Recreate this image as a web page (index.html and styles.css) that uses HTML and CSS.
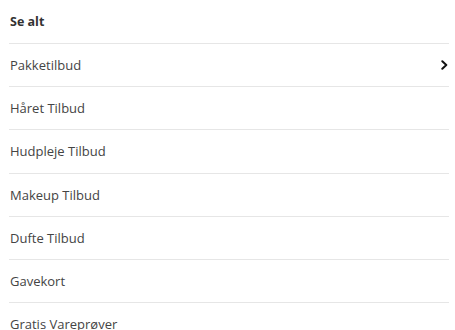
FILE: index.html
```html
<!DOCTYPE html>
<html lang="da">
<head>
<meta charset="utf-8">
<link rel="stylesheet" href="styles.css">
</head>
<body>
<nav class="menu">
  <div class="menu-head">Se alt</div>
  <ul class="menu-list">
    <li class="menu-item"><span>Pakketilbud</span>
      <svg class="chev" width="7" height="10" viewBox="0 0 7 10"><path d="M1.3 1.3 L5.3 5 L1.3 8.7" fill="none" stroke="#111" stroke-width="2" stroke-linecap="round" stroke-linejoin="round"/></svg>
    </li>
    <li class="menu-item"><span>Håret Tilbud</span></li>
    <li class="menu-item"><span>Hudpleje Tilbud</span></li>
    <li class="menu-item"><span>Makeup Tilbud</span></li>
    <li class="menu-item"><span>Dufte Tilbud</span></li>
    <li class="menu-item"><span>Gavekort</span></li>
    <li class="menu-item"><span>Gratis Vareprøver</span></li>
  </ul>
</nav>
</body>
</html>
```
FILE: styles.css
```css
html, body {
  margin: 0;
  padding: 0;
  background: #fff;
}
body {
  font-family: "Open Sans", "Noto Sans", sans-serif;
  color: #444;
  font-size: 13px;
}
.menu {
  padding: 0 6px 0 10px;
}
.menu-head {
  height: 43px;
  display: flex;
  align-items: center;
  font-weight: 700;
  color: #333;
  font-size: 12.5px;
  border-bottom: 1px solid #e6e6e6;
  margin-left: -1px;
  padding-left: 1px;
}
.menu-list {
  list-style: none;
  margin: 0 0 0 -1px;
  padding: 0;
}
.menu-item {
  height: 42.2px;
  display: flex;
  align-items: center;
  justify-content: space-between;
  padding: 0 1px 0 1px;
  border-bottom: 1px solid #e6e6e6;
}
.chev {
  display: block;
}
```
